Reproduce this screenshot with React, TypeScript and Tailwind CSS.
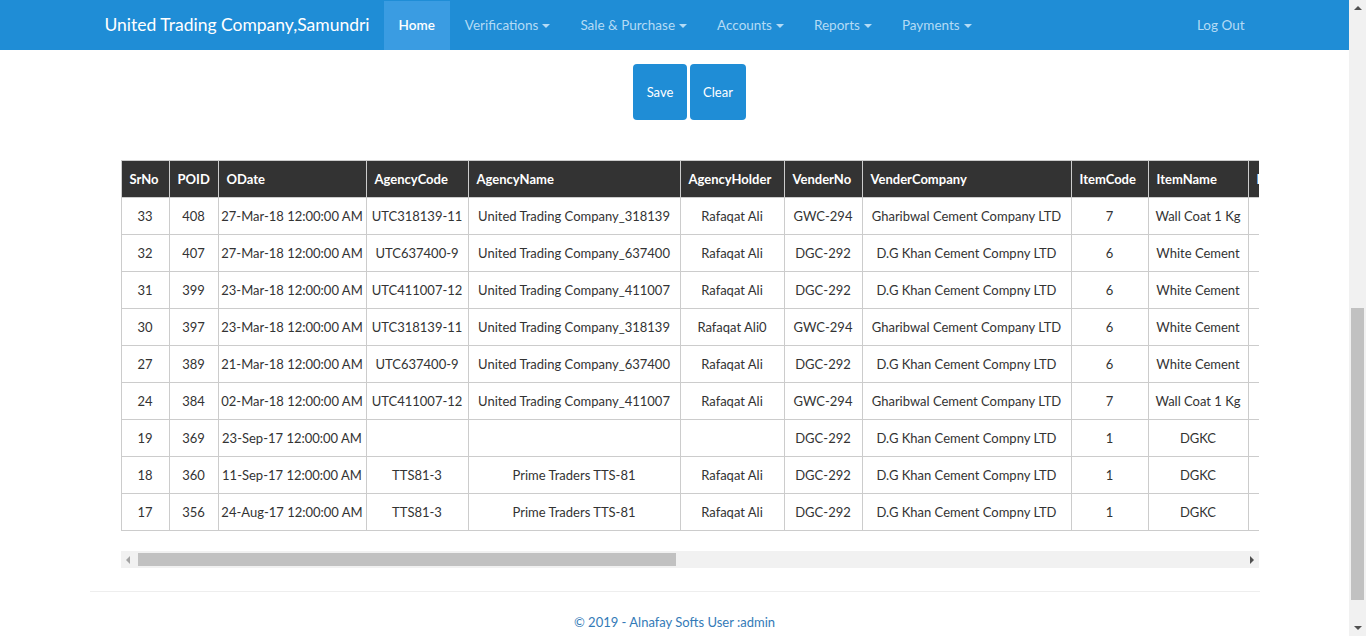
import React from "react";

const cols = [
  { name: "SrNo", w: 48 },
  { name: "POID", w: 49 },
  { name: "ODate", w: 148 },
  { name: "AgencyCode", w: 102 },
  { name: "AgencyName", w: 212 },
  { name: "AgencyHolder", w: 104 },
  { name: "VenderNo", w: 78 },
  { name: "VenderCompany", w: 209 },
  { name: "ItemCode", w: 77 },
  { name: "ItemName", w: 100 },
  { name: "ItemQty", w: 80 },
  { name: "Rate", w: 80 },
];

const rows = [
  ["33", "408", "27-Mar-18 12:00:00 AM", "UTC318139-11", "United Trading Company_318139", "Rafaqat Ali", "GWC-294", "Gharibwal Cement Company LTD", "7", "Wall Coat 1 Kg", "10", "500"],
  ["32", "407", "27-Mar-18 12:00:00 AM", "UTC637400-9", "United Trading Company_637400", "Rafaqat Ali", "DGC-292", "D.G Khan Cement Compny LTD", "6", "White Cement", "10", "500"],
  ["31", "399", "23-Mar-18 12:00:00 AM", "UTC411007-12", "United Trading Company_411007", "Rafaqat Ali", "DGC-292", "D.G Khan Cement Compny LTD", "6", "White Cement", "10", "500"],
  ["30", "397", "23-Mar-18 12:00:00 AM", "UTC318139-11", "United Trading Company_318139", "Rafaqat Ali0", "GWC-294", "Gharibwal Cement Company LTD", "6", "White Cement", "10", "500"],
  ["27", "389", "21-Mar-18 12:00:00 AM", "UTC637400-9", "United Trading Company_637400", "Rafaqat Ali", "DGC-292", "D.G Khan Cement Compny LTD", "6", "White Cement", "10", "500"],
  ["24", "384", "02-Mar-18 12:00:00 AM", "UTC411007-12", "United Trading Company_411007", "Rafaqat Ali", "GWC-294", "Gharibwal Cement Company LTD", "7", "Wall Coat 1 Kg", "10", "500"],
  ["19", "369", "23-Sep-17 12:00:00 AM", "", "", "", "DGC-292", "D.G Khan Cement Compny LTD", "1", "DGKC", "10", "500"],
  ["18", "360", "11-Sep-17 12:00:00 AM", "TTS81-3", "Prime Traders TTS-81", "Rafaqat Ali", "DGC-292", "D.G Khan Cement Compny LTD", "1", "DGKC", "10", "500"],
  ["17", "356", "24-Aug-17 12:00:00 AM", "TTS81-3", "Prime Traders TTS-81", "Rafaqat Ali", "DGC-292", "D.G Khan Cement Compny LTD", "1", "DGKC", "10", "500"],
];

const menus = ["Verifications", "Sale & Purchase", "Accounts", "Reports", "Payments"];

const Caret = () => (
  <span className="ml-[4px] inline-block align-middle border-x-[4px] border-t-[4px] border-x-transparent border-t-current" />
);

const App = () => {
  return (
    <div className="flex h-[636px] w-[1366px] overflow-hidden bg-white font-['Lato','Open_Sans',sans-serif] text-[#333]">
      <div className="flex w-[1349px] flex-col">
        {/* navbar */}
        <div className="h-[50px] bg-[#1f8dd6]">
          <div className="mx-auto flex h-full w-[1170px] items-center px-[15px]">
            <span className="pr-[14px] text-[17.5px] text-white">United Trading Company,Samundri</span>
            <div className="flex h-full items-center pt-[1px] text-[13.5px] text-[#b4dbf5]">
              <span className="flex h-full items-center bg-[#3a9ce2] px-[15px] font-semibold text-white">Home</span>
              {menus.map((m) => (
                <span key={m} className="flex h-full items-center px-[15px]">
                  {m}
                  <Caret />
                </span>
              ))}
            </div>
            <span className="ml-auto pt-[1px] text-[13.5px] text-[#b4dbf5]">Log Out</span>
          </div>
        </div>

        <div className="mx-auto w-[1170px]">
          <div className="mt-[14px] flex justify-center gap-[3px] pl-[30px]">
            <button className="h-[56px] w-[54px] rounded-[4px] bg-[#1f8dd6] pt-[2px] text-[13px] text-white">Save</button>
            <button className="h-[56px] w-[56px] rounded-[4px] bg-[#1f8dd6] pt-[2px] text-[13px] text-white">Clear</button>
          </div>

          <div className="ml-[31px] mt-[40px] w-[1138px]">
            <div className="overflow-hidden">
              <table className="table-fixed border-collapse text-[13px]" style={{ width: cols.reduce((a, c) => a + c.w, 0) }}>
                <colgroup>
                  {cols.map((c) => (
                    <col key={c.name} style={{ width: c.w }} />
                  ))}
                </colgroup>
                <thead>
                  <tr className="h-[37px] bg-[#333] text-left text-white">
                    {cols.map((c) => (
                      <th key={c.name} className="whitespace-nowrap border border-[#ccc] px-[8px] pt-[1px] font-bold">
                        {c.name}
                      </th>
                    ))}
                  </tr>
                </thead>
                <tbody>
                  {rows.map((r) => (
                    <tr key={r[0]} className="h-[37px]">
                      {r.map((v, i) => (
                        <td key={i} className="whitespace-nowrap border border-[#ccc] px-[2px] pt-[1px] text-center">
                          {v}
                        </td>
                      ))}
                    </tr>
                  ))}
                </tbody>
              </table>
            </div>
            {/* horizontal scrollbar */}
            <div className="mt-[20px] flex h-[17px] items-center bg-[#f1f1f1]">
              <span className="ml-[5px] h-0 w-0 border-y-[4px] border-r-[4px] border-y-transparent border-r-[#a3a3a3]" />
              <div className="ml-[8px] h-[13px] w-[538px] bg-[#c1c1c1]" />
              <span className="ml-auto mr-[5px] h-0 w-0 border-y-[4px] border-l-[4px] border-y-transparent border-l-[#505050]" />
            </div>
          </div>

          <hr className="mt-[23px] border-[#eee]" />
          <div className="mt-[21px] text-center text-[13px] text-[#337ab7]">© 2019 - Alnafay Softs User :admin</div>
        </div>
      </div>

      {/* vertical scrollbar */}
      <div className="flex w-[17px] flex-col items-center bg-[#f1f1f1]">
        <span className="mt-[6px] h-0 w-0 border-x-[4px] border-b-[4px] border-x-transparent border-b-[#505050]" />
        <div className="mt-[298px] h-[292px] w-[13px] bg-[#c1c1c1]" />
        <span className="mt-auto mb-[6px] h-0 w-0 border-x-[4px] border-t-[4px] border-x-transparent border-t-[#505050]" />
      </div>
    </div>
  );
};

export default App;
